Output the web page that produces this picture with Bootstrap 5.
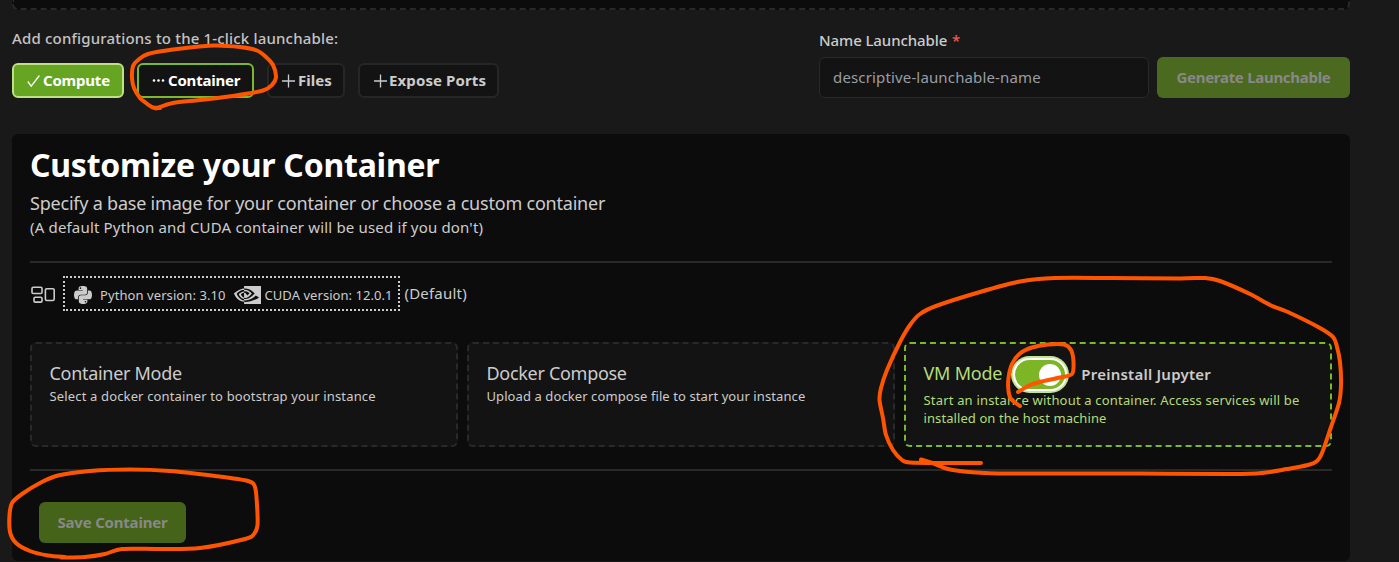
<!DOCTYPE html>
<html lang="en" data-bs-theme="dark">
<head>
<meta charset="utf-8">
<meta name="viewport" content="width=device-width, initial-scale=1">
<title>Customize your Container</title>
<link rel="stylesheet" href="https://cdn.jsdelivr.net/npm/bootstrap@5.3.0/dist/css/bootstrap.min.css">
<style>
body{background:#191919;color:#ccc;font-family:"Noto Sans",sans-serif;font-size:15px;line-height:20px;height:562px;overflow:hidden}
.page-wrap{width:1338px;margin-left:12px}
.drop-zone{height:10px;background:#0c0c0c;border:2px dashed #292929;border-top:0;border-radius:0 0 6px 6px}
.cfg-label{padding-top:18px;margin-bottom:15px;font-weight:500;letter-spacing:.175px;color:#c4c4c4}
.name-label{padding-top:20px;margin-bottom:7px;font-weight:500;letter-spacing:-.1px}
.required{color:#f2594f;margin-left:1px}
.cfg-btn{height:35px;padding:0 0 2px 13px;border:2px solid #262626;border-radius:6px;background:#131313;color:#ccc;font-size:15px;font-weight:700;line-height:20px;display:flex;align-items:center;gap:3px;white-space:nowrap}
.cfg-btn svg{flex:none;margin-top:2px}
.cfg-done{background:#65a522;border-color:#bfe085;color:#fff;width:112px;letter-spacing:-.2px}
.cfg-active{border-color:#7cb829;color:#fff;width:117px;letter-spacing:-.2px}
.cfg-files{width:78px}
.cfg-ports{width:141px;padding-left:14px;gap:2px;letter-spacing:.114px}
.name-input{width:330px;height:41px;background:#131313;border:1px solid #292929;border-radius:6px;padding:0 13px 1px;font-size:15px;letter-spacing:.15px;color:#ccc}
.name-input::placeholder{color:#9a9ea3;opacity:1}
.big-btn,.big-btn:disabled{height:41px;border:0;border-radius:6px;padding:0;font-size:15px;font-weight:700;color:#888;opacity:1;white-space:nowrap}
.gen-btn,.gen-btn:disabled{width:193px;background:#4b6a20;letter-spacing:-.29px}
.save-btn,.save-btn:disabled{width:147px;background:#456319;letter-spacing:-.2px;margin:31px 0 0 9px}
.panel{margin-top:36px;height:427px;background:#0c0c0c;border-radius:6px;padding:11px 18px 0}
.panel h1{font-size:32px;line-height:40px;font-weight:700;color:#fff;letter-spacing:-.24px;margin:0 0 4px}
.sub-1{font-size:18px;line-height:28px;letter-spacing:-.215px}
.sub-2{letter-spacing:.173px}
.rule{height:2px;background:#292929}
.versions{height:35px;border:2px dotted #ccc;width:337px;font-size:13px;padding:2px 0 0 9px;margin-left:8px}
.mode-card{flex:1 1 0;height:105px;background:#131313;border:2px dashed #292929;border-radius:6px;padding:15px 17.5px}
.mode-card h2{font-size:18px;line-height:28px;font-weight:400;letter-spacing:-.3px;margin:0;color:#ccc}
.mode-card p{font-size:13px;line-height:18px;letter-spacing:.15px;margin:0}
.mode-card .tight{letter-spacing:.09px}
.mode-vm{border-color:#7cb829;color:#b5dd78}
.mode-vm h2{color:#b5dd78;letter-spacing:-.208px}
.mode-vm p{letter-spacing:.18px;margin-right:-10px}
.jupyter{color:#ccc;font-weight:600;letter-spacing:.23px;margin-top:5px}
.toggle{width:58px;height:37px;margin:-3px 12px -2px 9px;border-radius:19px;background:#c2e392;padding:2px}
.toggle-track{height:33px;border-radius:17px;border:2px solid #fff;background:#7cb526;padding:0 4px 0 0;display:flex;align-items:center;justify-content:flex-end}
.toggle-knob{width:22px;height:22px;border-radius:50%;background:#fff}
.pen{position:absolute;left:0;top:0;pointer-events:none}
</style>
</head>
<body>
<main class="page-wrap">
  <div class="drop-zone"></div>
  <div class="d-flex justify-content-between">
    <div>
      <div class="cfg-label">Add configurations to the 1-click launchable:</div>
      <div class="d-flex" style="gap:13px">
        <button class="cfg-btn cfg-done"><svg width="13" height="14" fill="none" stroke="#fff" stroke-width="1.3"><path d="M.8 7.5l3.4 4.6L12.4 1.5"/></svg>Compute</button>
        <button class="cfg-btn cfg-active"><svg width="13" height="14" fill="#fff"><circle cx="2" cy="6.5" r="1.3"/><circle cx="6.5" cy="6.5" r="1.3"/><circle cx="11" cy="6.5" r="1.3"/></svg>Container</button>
        <button class="cfg-btn cfg-files"><svg width="13" height="14" stroke="#ccc" stroke-width="1.3"><path d="M6.5 .5v13M0 7h13"/></svg>Files</button>
        <button class="cfg-btn cfg-ports"><svg width="13" height="14" stroke="#ccc" stroke-width="1.3"><path d="M6.5 .5v13M0 7h13"/></svg>Expose Ports</button>
      </div>
    </div>
    <div>
      <div class="name-label">Name Launchable <span class="required">*</span></div>
      <div class="d-flex gap-2">
        <input class="name-input" placeholder="descriptive-launchable-name">
        <button class="btn big-btn gen-btn" disabled>Generate Launchable</button>
      </div>
    </div>
  </div>

  <section class="panel">
    <h1>Customize your Container</h1>
    <div class="sub-1">Specify a base image for your container or choose a custom container</div>
    <div class="sub-2">(A default Python and CUDA container will be used if you don't)</div>
    <div class="rule mt-4"></div>
    <div class="d-flex" style="margin-top:13px">
      <svg width="25" height="20" style="margin-top:9px" fill="none" stroke="#ccc" stroke-width="1.6"><rect x="2" y="2.3" width="10" height="6.2" rx="1.3"/><rect x="4" y="12.3" width="8" height="4.8" rx="1.2"/><rect x="15.4" y="3.7" width="8.8" height="11.8" rx="1.4"/></svg>
      <div class="versions d-flex align-items-center text-nowrap">
        <svg width="18" height="18" viewBox="0 32 448 448" fill="#ccc"><path d="M439.8 200.5c-7.7-30.9-22.3-54.2-53.4-54.2h-40.1v47.4c0 36.8-31.2 67.8-66.8 67.8H172.7c-29.2 0-53.4 25-53.4 54.3v101.8c0 29 25.2 46 53.4 54.3 33.8 9.9 66.3 11.7 106.8 0 26.9-7.8 53.4-23.5 53.4-54.3v-40.7H226.2v-13.6h160.2c31.1 0 42.6-21.7 53.4-54.2 11.2-33.5 10.7-65.7 0-108.6zM286.2 404c11.1 0 20.1 9.1 20.1 20.3 0 11.3-9 20.4-20.1 20.4-11 0-20.1-9.2-20.1-20.4.1-11.3 9.1-20.3 20.1-20.3zM167.8 248.1h106.8c29.7 0 53.4-24.5 53.4-54.3V91.9c0-29-24.4-50.7-53.4-55.6-35.8-5.9-74.7-5.6-106.8.1-45.2 8-53.4 24.7-53.4 55.6v40.7h106.9v13.6h-147c-31.1 0-58.3 18.7-66.8 54.2-9.8 40.7-10.2 66.1 0 108.6 7.6 31.6 25.7 54.2 56.8 54.2H101v-48.8c0-35.3 30.5-66.4 66.8-66.4zm-6.7-142.6c-11.1 0-20.1-9.1-20.1-20.3.1-11.3 9-20.4 20.1-20.4 11 0 20.1 9.2 20.1 20.4s-9 20.3-20.1 20.3z"/></svg>
        <span style="margin:0 8px;letter-spacing:.08px">Python version: 3.10</span>
        <svg width="27" height="18" viewBox="0 4 24 16" fill="#ccc"><path d="M8.948 8.798v-1.43a6.7 6.7 0 0 1 .424-.018c3.922-.124 6.493 3.374 6.493 3.374s-2.774 3.851-5.75 3.851c-.398 0-.787-.062-1.158-.185v-4.346c1.528.185 1.837.857 2.747 2.385l2.04-1.714s-1.492-1.952-4-1.952a6.016 6.016 0 0 0-.796.035m0-4.735v2.138l.424-.027c5.45-.185 9.01 4.47 9.01 4.47s-4.08 4.964-8.33 4.964c-.37 0-.733-.035-1.095-.097v1.325c.3.035.61.062.91.062 3.957 0 6.82-2.023 9.593-4.408.459.371 2.34 1.263 2.73 1.652-2.633 2.208-8.772 3.984-12.253 3.984-.335 0-.653-.018-.971-.053v1.864H24V4.063zm0 10.326v1.131c-3.657-.654-4.673-4.46-4.673-4.46s1.758-1.944 4.673-2.262v1.237H8.94c-1.528-.186-2.73 1.245-2.73 1.245s.68 2.412 2.739 3.11M2.456 10.9s2.164-3.197 6.5-3.533V6.201C4.153 6.59 0 10.653 0 10.653s2.35 6.802 8.948 7.42v-1.237c-4.84-.6-6.492-5.936-6.492-5.936z"/></svg>
        <span style="margin-left:4px;letter-spacing:.05px">CUDA version: 12.0.1</span>
      </div>
      <div style="margin:7px 0 0 4.5px;letter-spacing:.2px">(Default)</div>
    </div>
    <div class="d-flex" style="margin-top:31px;gap:9px">
      <div class="mode-card"><h2>Container Mode</h2><p>Select a docker container to bootstrap your instance</p></div>
      <div class="mode-card"><h2>Docker Compose</h2><p class="tight">Upload a docker compose file to start your instance</p></div>
      <div class="mode-card mode-vm">
        <div class="d-flex align-items-start" style="height:32px">
          <h2>VM Mode</h2>
          <div class="toggle"><div class="toggle-track"><div class="toggle-knob"></div></div></div>
          <div class="jupyter">Preinstall Jupyter</div>
        </div>
        <p>Start an instance without a container. Access services will be<br><span class="tight">installed on the host machine</span></p>
      </div>
    </div>
    <div class="rule" style="margin-top:22px"></div>
    <button class="btn big-btn save-btn" disabled>Save Container</button>
  </section>
</main>

<svg class="pen" width="1399" height="562" fill="none" stroke="#ff5500" stroke-width="4" stroke-linecap="round" stroke-linejoin="round"></svg>

<script src="https://cdn.jsdelivr.net/npm/bootstrap@5.3.0/dist/js/bootstrap.bundle.min.js"></script>
<script>
// Freehand marker strokes, drawn as smooth curves through their points
const strokes = [
  [[160,108],[153,107.5],[146,103],[140,98],[134,88],[132,78],[133,66],[138,60],[148,54],[173,49.5],[213,45.5],[240,47],[257,50.5],[266,57],[273,65],[276,77],[272,85],[263,90.5],[233,96],[200,100],[173,103],[156,108.5]],
  [[981,463],[945,463],[910,462.5],[902,460],[893,450],[886,435],[883,418],[879.5,400],[881,388],[887,370],[900,342],[910,325],[920,314],[936,306],[980,292],[1020,281.5],[1055,278],[1110,278],[1180,278.5],[1205,278],[1220,281],[1250,294],[1270,305],[1290,313],[1320,328],[1333,337],[1336.5,345],[1340,362],[1341,385],[1339,403],[1331,427],[1322,453],[1317,461],[1308,465],[1287,469],[1262,473],[1230,474],[1140,473.5],[1010,473.5],[970,472],[948,469],[935,464],[921,459.5]],
  [[1020,406],[1011,399],[1008.5,391],[1008.5,378],[1012,364],[1020,353.5],[1032,347.5],[1048,344.5],[1064,344.5],[1071,350],[1073.5,362],[1072,374],[1060,377.5],[1040,382],[1030,385],[1018,392]],
  [[65,557],[48,555.5],[30,551],[16,543],[10,532],[9.5,515],[12,503],[22,494],[40,483],[58,475.5],[90,471],[130,469.5],[170,471],[215,476],[248,481],[255,487],[257,505],[257.5,525],[254,534],[245,539],[200,548],[160,549],[122,549],[105,554],[85,557],[61,557.5]]
];
const pen = document.querySelector('.pen');
for (const p of strokes) {
  let d = `M${p[0]}`;
  for (let i = 0; i < p.length - 1; i++) {
    const a = p[Math.max(i - 1, 0)], b = p[i], c = p[i + 1], e = p[Math.min(i + 2, p.length - 1)];
    d += `C${b[0] + (c[0] - a[0]) / 7} ${b[1] + (c[1] - a[1]) / 7} ${c[0] - (e[0] - b[0]) / 7} ${c[1] - (e[1] - b[1]) / 7} ${c}`;
  }
  const path = document.createElementNS('http://www.w3.org/2000/svg', 'path');
  path.setAttribute('d', d);
  pen.appendChild(path);
}
</script>
</body>
</html>
